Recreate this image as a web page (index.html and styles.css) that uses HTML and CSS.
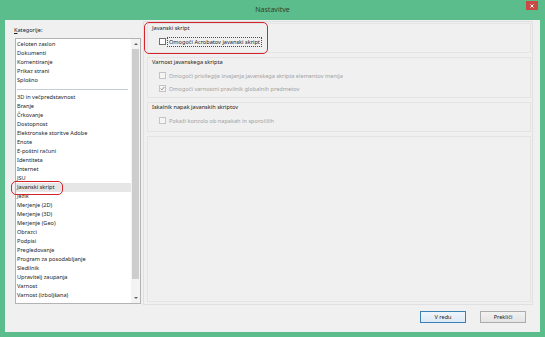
FILE: index.html
```html
<!DOCTYPE html>
<html lang="sl">
<head>
<meta charset="utf-8">
<title>Nastavitve</title>
<link rel="stylesheet" href="styles.css">
</head>
<body>
<div class="window">
  <div class="titlebar">
    <span class="title">Nastavitve</span>
    <div class="close"><svg width="4" height="4" viewBox="0 0 4 4"><path d="M0.5 0.5L3.5 3.5M3.5 0.5L0.5 3.5" stroke="#fff" stroke-width="1"/></svg></div>
  </div>
  <div class="client">
    <div class="main">
      <div class="left">
        <div class="label"><u>K</u>ategorije:</div>
        <div class="listbox">
          <div class="items">
            <div class="item">Celoten zaslon</div>
            <div class="item">Dokumenti</div>
            <div class="item">Komentiranje</div>
            <div class="item">Prikaz strani</div>
            <div class="item">Splošno</div>
            <div class="sep"></div>
            <div class="item">3D in večpredstavnost</div>
            <div class="item">Branje</div>
            <div class="item">Črkovanje</div>
            <div class="item">Dostopnost</div>
            <div class="item">Elektronske storitve Adobe</div>
            <div class="item">Enote</div>
            <div class="item">E-poštni računi</div>
            <div class="item">Identiteta</div>
            <div class="item">Internet</div>
            <div class="item">JSU</div>
            <div class="item sel">Javanski skript</div>
            <div class="item">Jezik</div>
            <div class="item">Merjenje (2D)</div>
            <div class="item">Merjenje (3D)</div>
            <div class="item">Merjenje (Geo)</div>
            <div class="item">Obrazci</div>
            <div class="item">Podpisi</div>
            <div class="item">Pregledovanje</div>
            <div class="item">Program za posodabljanje</div>
            <div class="item">Sledilnik</div>
            <div class="item">Upravitelj zaupanja</div>
            <div class="item">Varnost</div>
            <div class="item">Varnost (izboljšana)</div>
          </div>
          <div class="scrollbar">
            <div class="sb-btn"><span class="arrow up"></span></div>
            <div class="thumb"></div>
            <div class="track"></div>
            <div class="sb-btn"><span class="arrow down"></span></div>
          </div>
          <div class="mark mark-item"></div>
        </div>
      </div>
      <div class="panel">
        <div class="group g1">
          <div class="ghead">Javanski skript</div>
          <div class="opt">
            <span class="cb"></span>
            <span class="otext focus">Omogoči Acrobatov javanski skript</span>
          </div>
          <div class="mark mark-group"></div>
        </div>
        <div class="group g2">
          <div class="ghead">Varnost javanskega skripta</div>
          <div class="opt dis">
            <span class="cb"></span>
            <span class="otext">Omogoči privilegije izvajanja javanskega skripta elementov menija</span>
          </div>
          <div class="opt dis">
            <span class="cb"><svg width="5" height="5" viewBox="0 0 5 5"><path d="M0.6 2.6L1.9 3.9L4.4 0.9" fill="none" stroke="#8f8f8f" stroke-width="1"/></svg></span>
            <span class="otext">Omogoči varnostni pravilnik globalnih predmetov</span>
          </div>
        </div>
        <div class="group g3">
          <div class="ghead">Iskalnik napak javanskih skriptov</div>
          <div class="opt dis">
            <span class="cb"></span>
            <span class="otext">Pokaži konzolo ob napakah in sporočilih</span>
          </div>
        </div>
        <div class="group g4"></div>
      </div>
    </div>
    <div class="buttons">
      <button class="btn default">V redu</button>
      <button class="btn">Prekliči</button>
    </div>
  </div>
</div>
</body>
</html>
```
FILE: styles.css
```css
* {
  box-sizing: border-box;
  margin: 0;
  padding: 0;
}

html, body {
  width: 545px;
  height: 337px;
  overflow: hidden;
}

body {
  background: #5bbd8b;
  font-family: "Noto Sans", "Liberation Sans", sans-serif;
  font-size: 5.6px;
  color: #1c1c1c;
}

.window {
  width: 545px;
  height: 337px;
  display: flex;
  flex-direction: column;
  background: #5bbd8b;
}

.titlebar {
  height: 20px;
  position: relative;
  text-align: center;
  line-height: 19px;
  font-size: 7px;
  color: #2f3d36;
}

.close {
  position: absolute;
  right: 7px;
  top: 1px;
  width: 12px;
  height: 9px;
  background: #c94a44;
  display: flex;
  align-items: center;
  justify-content: center;
}

.close svg {
  display: block;
}

.client {
  flex: 1;
  margin: 0 5px 5px;
  background: #f0f0f0;
  display: flex;
  flex-direction: column;
}

.main {
  display: flex;
  height: 285px;
}

.left {
  width: 138px;
  padding: 6px 0 0 9px;
}

.label {
  height: 8px;
  line-height: 8px;
  margin-bottom: 4px;
}

.listbox {
  width: 126px;
  height: 266px;
  margin-left: 1px;
  border: 1px solid #b3b3b3;
  background: #fff;
  display: flex;
  position: relative;
}

.items {
  flex: 1;
  overflow: hidden;
  padding-top: 1px;
}

.item {
  height: 9px;
  line-height: 9px;
  padding-left: 1px;
  white-space: nowrap;
}

.item.sel {
  background: #e6e6e6;
}

.sep {
  height: 1px;
  margin: 4px 3px 3px 1px;
  background: #c6cdd6;
}

.scrollbar {
  width: 9px;
  display: flex;
  flex-direction: column;
  background: #f3f3f3;
}

.sb-btn {
  height: 10px;
  display: flex;
  align-items: center;
  justify-content: center;
}

.arrow {
  width: 0;
  height: 0;
  border-left: 2px solid transparent;
  border-right: 2px solid transparent;
}

.arrow.up {
  border-bottom: 2px solid #606060;
}

.arrow.down {
  border-top: 2px solid #606060;
}

.thumb {
  height: 230px;
  margin: 0 1px;
  background: #cdcdcd;
}

.track {
  flex: 1;
}

.mark {
  position: absolute;
  border: 1.5px solid #d6232b;
  border-radius: 5px;
  pointer-events: none;
}

.mark-item {
  left: -5px;
  top: 142px;
  width: 52px;
  height: 14px;
}

.panel {
  width: 390px;
  height: 284px;
  margin-top: 1px;
  border: 1px solid #e0e0e0;
  padding: 1px 1px 2px 3px;
  display: flex;
  flex-direction: column;
  gap: 4px;
}

.group {
  border: 1px solid #e4e4e4;
  padding: 0 4px;
  position: relative;
}

.g1 { height: 30px; }
.g2 { height: 41px; }
.g3 { height: 30px; }
.g4 { flex: 1; }

.ghead {
  height: 9px;
  line-height: 9px;
  white-space: nowrap;
}

.opt {
  height: 13px;
  display: flex;
  align-items: center;
  padding-left: 7px;
  white-space: nowrap;
}

.ghead + .opt {
  margin-top: 2px;
}

.cb {
  width: 7px;
  height: 7px;
  border: 1px solid #707070;
  background: #fff;
  margin-right: 1px;
  display: flex;
  align-items: center;
  justify-content: center;
  flex: none;
}

.cb svg {
  display: block;
}

.otext {
  line-height: 8px;
  padding: 0 1px;
  border: 1px solid transparent;
}

.otext.focus {
  border: 1px dotted #4a4a4a;
}

.opt.dis {
  color: #a2a2a2;
}

.opt.dis .cb {
  border-color: #c4c4c4;
  background: #f5f5f5;
}

.mark-group {
  left: -4px;
  top: -2px;
  width: 124px;
  height: 32px;
}

.buttons {
  display: flex;
  justify-content: flex-end;
  gap: 14px;
  padding: 6px 14px 0 0;
}

.btn {
  width: 46px;
  height: 12px;
  border: 1px solid #acacac;
  background: linear-gradient(#f2f2f2, #e4e4e4);
  font-family: inherit;
  font-size: 5.6px;
  color: #222;
}

.btn.default {
  border-color: #3c7fb1;
  background: linear-gradient(#eef5fc, #dde9f5);
}
```
